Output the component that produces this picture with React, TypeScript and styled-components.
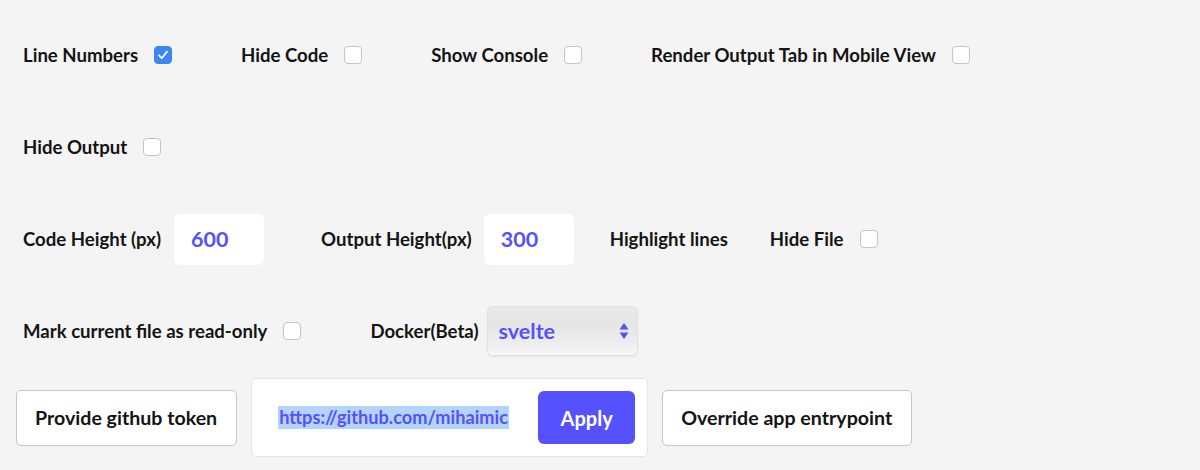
import React from "react";
import styled, { createGlobalStyle } from "styled-components";

const GlobalStyle = createGlobalStyle`
  html, body { margin: 0; padding: 0; background: #f4f4f4; }
  body { font-family: "Lato", "Noto Sans", sans-serif; color: #111; }
`;

const Page = styled.div`
  width: 1200px;
  height: 470px;
  box-sizing: border-box;
  padding-top: 9px;
  display: flex;
  flex-direction: column;
  background: #f4f4f4;
`;

const Row = styled.div`
  height: 92px;
  display: flex;
  align-items: center;
  padding-left: 23px;
`;

const Field = styled.label<{ $mr?: number }>`
  display: flex;
  align-items: center;
  margin-right: ${(p) => p.$mr ?? 69}px;
`;

const Label = styled.span<{ $gap?: number }>`
  font-size: 18.6px;
  font-weight: 700;
  color: #141414;
  margin-right: ${(p) => p.$gap ?? 16}px;
  white-space: nowrap;
`;

const Box = styled.span<{ $checked?: boolean }>`
  width: 18px;
  height: 18px;
  box-sizing: border-box;
  border-radius: 4px;
  display: inline-flex;
  align-items: center;
  justify-content: center;
  background: ${(p) => (p.$checked ? "#3b86f7" : "#ffffff")};
  border: 1px solid ${(p) => (p.$checked ? "#3b86f7" : "#c4c4c4")};
`;

const NumberInput = styled.input`
  width: 90px;
  height: 51px;
  box-sizing: border-box;
  border: none;
  border-radius: 6px;
  background: #ffffff;
  padding: 0 0 0 17px;
  font-family: "Lato", "Noto Sans", sans-serif;
  font-size: 21.5px;
  font-weight: 700;
  color: #5650ff;
  outline: none;
`;

const SelectWrap = styled.div`
  position: relative;
  width: 151px;
  height: 50px;
`;

const Select = styled.select`
  appearance: none;
  -webkit-appearance: none;
  width: 100%;
  height: 100%;
  border: none;
  border-radius: 6px;
  padding: 0 0 0 12px;
  font-family: "Lato", "Noto Sans", sans-serif;
  font-size: 21.5px;
  font-weight: 700;
  color: #5650ff;
  background: linear-gradient(#eaeaea 0%, #e5e5e5 40%, #eeeeee 75%, #f8f8f8 100%);
  box-shadow: inset 0 0 0 1px #e2e2e2, 0 1px 2px rgba(0, 0, 0, 0.07);
  outline: none;
`;

const Arrows = styled.svg`
  position: absolute;
  right: 9px;
  top: 16px;
  pointer-events: none;
`;

const ButtonRow = styled.div`
  display: flex;
  align-items: center;
  padding-left: 16px;
  gap: 14px;
  margin-top: 1px;
`;

const OutlineButton = styled.button`
  height: 56px;
  box-sizing: border-box;
  padding: 0 19px 0 18px;
  background: #ffffff;
  border: 1px solid #c6c6c6;
  border-radius: 5px;
  font-family: "Lato", "Noto Sans", sans-serif;
  font-size: 19.6px;
  font-weight: 700;
  color: #141414;
  cursor: pointer;
`;

const Panel = styled.div`
  width: 397px;
  height: 79px;
  box-sizing: border-box;
  background: #ffffff;
  border: 1px solid #e4e4e4;
  border-radius: 5px;
  display: flex;
  align-items: center;
  padding: 0 12px 0 26px;
  justify-content: space-between;
`;

const UrlText = styled.span`
  font-size: 18.2px;
  font-weight: 700;
  color: #5650ff;
  background: #b3d4fd;
  line-height: 23px;
  padding: 0 1px;
  white-space: nowrap;
`;

const ApplyButton = styled.button`
  width: 97px;
  height: 53px;
  border: none;
  border-radius: 6px;
  background: #5551ff;
  color: #ffffff;
  font-family: "Lato", "Noto Sans", sans-serif;
  font-size: 20px;
  font-weight: 700;
  cursor: pointer;
`;

const Check = ({ checked }: { checked?: boolean }) => (
  <Box $checked={checked}>
    {checked && (
      <svg width="12" height="12" viewBox="0 0 12 12">
        <path d="M2 6.3 L4.8 9.2 L10 2.6" fill="none" stroke="#fff" strokeWidth="1.8" strokeLinecap="round" strokeLinejoin="round" />
      </svg>
    )}
  </Box>
);

export default function App() {
  return (
    <>
      <GlobalStyle />
      <Page>
        <Row>
          <Field>
            <Label>Line Numbers</Label>
            <Check checked />
          </Field>
          <Field>
            <Label>Hide Code</Label>
            <Check />
          </Field>
          <Field>
            <Label>Show Console</Label>
            <Check />
          </Field>
          <Field>
            <Label>Render Output Tab in Mobile View</Label>
            <Check />
          </Field>
        </Row>
        <Row>
          <Field>
            <Label>Hide Output</Label>
            <Check />
          </Field>
        </Row>
        <Row>
          <Field $mr={57}>
            <Label $gap={13}>Code Height (px)</Label>
            <NumberInput readOnly value="600" />
          </Field>
          <Field $mr={36}>
            <Label $gap={12}>Output Height(px)</Label>
            <NumberInput readOnly value="300" />
          </Field>
          <Field $mr={42}>
            <Label $gap={0}>Highlight lines</Label>
          </Field>
          <Field>
            <Label>Hide File</Label>
            <Check />
          </Field>
        </Row>
        <Row>
          <Field>
            <Label>Mark current file as read-only</Label>
            <Check />
          </Field>
          <Field>
            <Label $gap={8}>Docker(Beta)</Label>
            <SelectWrap>
              <Select defaultValue="svelte">
                <option value="svelte">svelte</option>
              </Select>
              <Arrows width="10" height="18" viewBox="0 0 10 18">
                <path d="M5 1 L9.5 7.5 L0.5 7.5 Z" fill="#5650ff" />
                <path d="M5 17 L9.5 10.5 L0.5 10.5 Z" fill="#5650ff" />
              </Arrows>
            </SelectWrap>
          </Field>
        </Row>
        <ButtonRow>
          <OutlineButton>Provide github token</OutlineButton>
          <Panel>
            <UrlText>https://github.com/mihaimic</UrlText>
            <ApplyButton>Apply</ApplyButton>
          </Panel>
          <OutlineButton>Override app entrypoint</OutlineButton>
        </ButtonRow>
      </Page>
    </>
  );
}
